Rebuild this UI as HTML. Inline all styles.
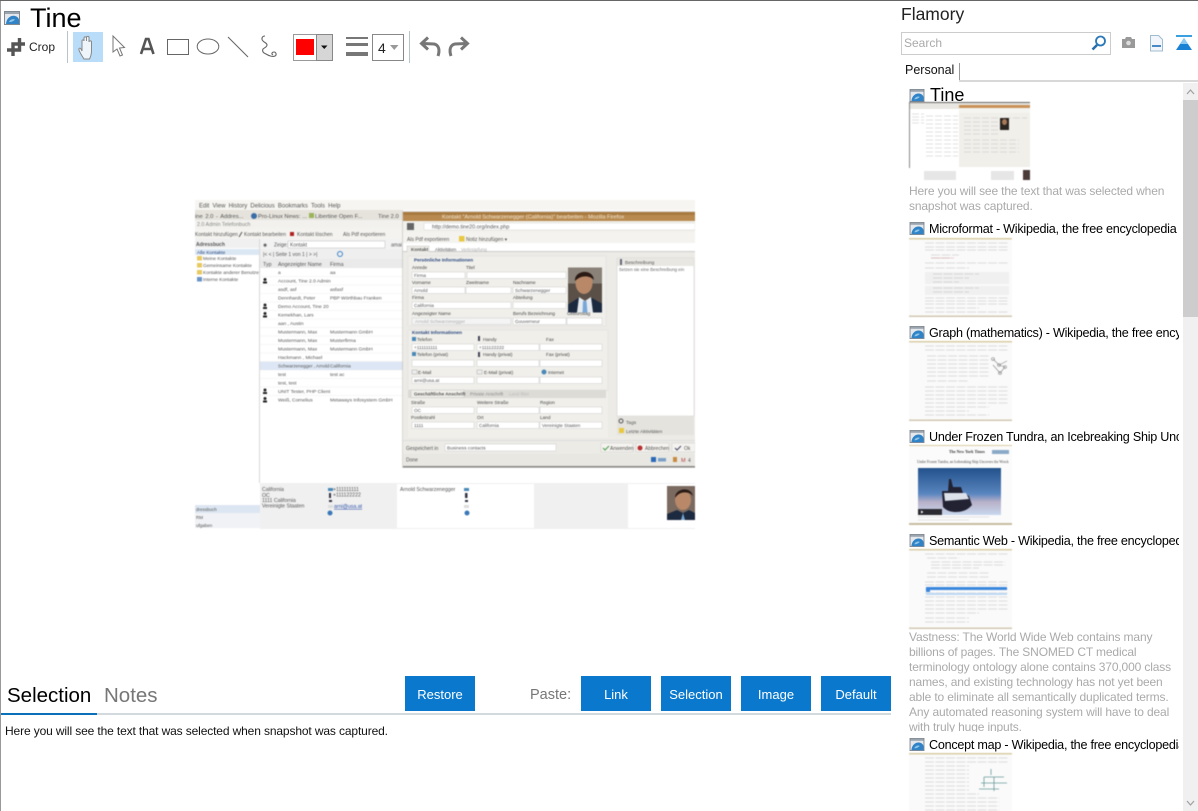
<!DOCTYPE html>
<html><head><meta charset="utf-8"><title>Flamory</title>
<style>
html,body{margin:0;padding:0;background:#fff}
#p{position:relative;width:1198px;height:811px;overflow:hidden;background:#fff;font-family:"Liberation Sans",sans-serif;color:#000}
#p>*{position:absolute}
.t{white-space:nowrap;line-height:1}
.b{background:#0a78cc;color:#fff;width:70px;height:35px;top:676px;text-align:center;font-size:13px;line-height:37px;font-weight:normal}
.it{left:929px;width:250px;overflow:hidden;font-size:12.6px;letter-spacing:-.25px;line-height:16px;white-space:nowrap}
.g{left:909px;width:270px;color:#aaa;font-size:12px;letter-spacing:-.14px;line-height:15px;white-space:nowrap}
svg{display:block;overflow:visible}
.th{filter:blur(.45px)}
</style></head><body><div id="p">
<svg width="0" height="0" style="left:0;top:0"><defs>
<symbol id="fav" viewBox="0 0 16 14"><rect x=".5" y=".5" width="15" height="13" fill="#e4e8ec" stroke="#808890"/><rect x="1" y="1" width="14" height="2" fill="#9aa4ae"/><path d="M2 13 C2.500 7 7 4 11 5 C13.500 5.600 15 7.500 15 9 L15 13Z" fill="#2f83c6"/><path d="M5 11 C6 8.500 9 7.500 11 8.500 C10 10 7 11.500 5 11Z" fill="#8cc4ea"/></symbol>
</defs></svg>

<div style="left:0;top:0;width:1198px;height:1px;background:#666"></div>
<div style="left:0;top:1px;width:1px;height:810px;background:#999"></div>

<svg width="16" height="14" style="left:4px;top:11px"><use href="#fav"/></svg>
<div class="t" style="left:30px;top:5px;font-size:27px">Tine</div>

<!-- toolbar -->
<svg width="480" height="40" style="left:0;top:28px" viewBox="0 28 480 40">
<path d="M19.500 38V50H7M13 56V44H25" stroke="#555" stroke-width="3.400" fill="none"/>
<rect x="67" y="31" width="1" height="32" fill="#b8c4cc"/>
<rect x="73" y="32" width="30" height="30" fill="#b9dcf8"/>
<path d="M84 59c-2-3-4-6-5-9-.5-2 1-2.500 2-1l1 2V41c0-1.500 2-1.500 2 0v-3c0-1.500 2.500-1.500 2.500 0v3-3.500c0-1.500 2.500-1.500 2.500 0V42c0-1.500 2.500-1.500 2.500 0v9c0 3-1 6-2 8h-6z" fill="#eef6fc" stroke="#888" stroke-width="1"/>
<path d="M113 36v16l4-3 3 7 2.500-1-3-7 5-.5z" fill="#fff" stroke="#777" stroke-width="1"/>
<path d="M141 54l5-15h2.500l5 15M143 49h8.500" stroke="#555" stroke-width="2.600" fill="none"/>
<rect x="167.500" y="39.500" width="21" height="15" fill="#fff" stroke="#666"/>
<ellipse cx="208" cy="46.500" rx="10.800" ry="7.500" fill="#fff" stroke="#666"/>
<path d="M228 37l20 20" stroke="#666" stroke-width="1.100"/>
<path d="M265 36c-3 0-4 3-2 5s4 2 4 4-3 3-4 4c-1 2 0 4 3 5 3 2 7 3 9 2s1-4-1-4-3 2-1 3" fill="none" stroke="#666" stroke-width="1.100"/>
<rect x="293.500" y="34.500" width="39" height="26" fill="#fff" stroke="#999"/>
<rect x="296" y="39" width="18" height="16" fill="#f00"/>
<rect x="316.500" y="34.500" width="16" height="26" fill="#d6d6d6" stroke="#888"/>
<path d="M321 45.500h6.500l-3.250 3.500z" fill="#111"/>
<rect x="346" y="37" width="22" height="2" fill="#777"/><rect x="346" y="43" width="22" height="3" fill="#777"/><rect x="346" y="52" width="22" height="4" fill="#777"/>
<rect x="372.500" y="34.500" width="31" height="26" fill="#fff" stroke="#888"/>
<path d="M390 45h8.500l-4.250 5z" fill="#999"/>
<rect x="409" y="31" width="1" height="32" fill="#b8c4cc"/>
<path d="M438 56c2-6 1-11-4-12l-11-.5M428 37.500l-6.500 6 6.500 6" fill="none" stroke="#777" stroke-width="3"/>
<path d="M451 56c-2-6-1-11 4-12l11-.5M461 37.500l6.500 6-6.500 6" fill="none" stroke="#777" stroke-width="3"/>
</svg>
<div class="t" style="left:29px;top:41px;font-size:12px;color:#222">Crop</div>
<div class="t" style="left:378px;top:41px;font-size:14px;color:#222">4</div>

<!-- main screenshot -->
<svg width="500" height="330" viewBox="195 200 500 330" style="left:195px;top:200px;overflow:hidden;filter:blur(.55px)" font-family="Liberation Sans" font-size="5.300" fill="#555">
<rect x="195" y="200" width="500" height="330" fill="#fff"/>
<rect x="195" y="200" width="500" height="10" fill="#f6f5f1"/>
<rect x="195" y="210" width="208" height="10" fill="#e6e3dc"/>
<rect x="195" y="220" width="208" height="8" fill="#f2f1ed"/>
<rect x="195" y="228" width="208" height="11" fill="#f4f3ef"/>
<text x="199" y="207.500" font-size="6" word-spacing="1.500">Edit View History Delicious Bookmarks Tools Help</text>
<text x="195" y="218" font-size="5.800" word-spacing="1">ine 2.0 - Addres...</text><text x="258" y="218" font-size="5.800">Pro-Linux News: ...</text><text x="315" y="218" font-size="5.800">Libertine Open F...</text><text x="378" y="218" font-size="5.800">Tine 2.0</text>
<circle cx="254" cy="216" r="3" fill="#3a6ea8"/><rect x="309" y="213" width="5" height="5" fill="#9ab45a"/>
<text x="197" y="226" fill="#888">2.0     Admin     Telefonbuch</text>
<text x="195" y="236" font-size="5">Kontakt hinzufügen</text><text x="244" y="236" font-size="5">Kontakt bearbeiten</text><text x="297" y="236" font-size="5">Kontakt löschen</text><text x="343" y="236" font-size="5">Als Pdf exportieren</text>
<path d="M239 237l3-5" stroke="#555"/><rect x="290" y="232" width="4" height="4" fill="#b02020"/>
<!-- sidebar -->
<rect x="195" y="239" width="65" height="9" fill="#f0f0f0"/>
<rect x="195" y="249" width="65" height="6" fill="#dce7f4"/>
<text x="196" y="246" font-weight="bold" font-size="5">Adressbuch</text>
<text x="197" y="254" font-size="4.800" fill="#24427a">Alle Kontakte</text>
<g fill="#e8c860"><rect x="197" y="256" width="5" height="4.500"/><rect x="197" y="263" width="5" height="4.500"/><rect x="197" y="270" width="5" height="4.500"/></g>
<rect x="197" y="277" width="5" height="4.500" fill="#6a94c8"/>
<g font-size="4.800"><text x="203" y="260">Meine Kontakte</text><text x="203" y="267">Gemeinsame Kontakte</text><text x="203" y="274">Kontakte anderer Benutzer</text><text x="203" y="281">Interne Kontakte</text></g>
<rect x="259" y="239" width="1" height="244" fill="#d8d8d8"/>
<!-- table -->
<rect x="260" y="239" width="143" height="10" fill="#f2f2f2"/>
<rect x="260" y="249" width="143" height="10" fill="#efefef"/>
<rect x="260" y="259" width="143" height="9" fill="#eaeaea"/>
<rect x="288" y="241" width="97" height="7" fill="#fff" stroke="#bbb" stroke-width=".5"/>
<text x="263" y="247" font-size="5">✱</text><text x="274" y="246.500" font-size="5">Zeige:</text><text x="290" y="246.500" font-size="5">Kontakt</text>
<text x="391" y="246.500" font-size="5">amai</text>
<text x="263" y="256" font-size="5">|&lt;  &lt;  | Seite 1  von 1 |  &gt;  &gt;|</text>
<circle cx="340" cy="254" r="2.500" fill="none" stroke="#3a84c8"/>
<text x="263" y="265.800">Typ</text><text x="278" y="265.800">Angezeigter Name</text><text x="330" y="265.800">Firma</text>
<rect x="260" y="361.500" width="143" height="8.500" fill="#dce6f4"/>
<g stroke="#eee" stroke-width=".5"><path d="M260 276.500H403M260 285H403M260 293.500H403M260 302H403M260 310.500H403M260 319H403M260 327.500H403M260 336H403M260 344.500H403M260 353H403M260 361.500H403M260 370H403M260 378.500H403M260 387H403M260 395.500H403"/></g>
<g font-size="4.900">
<text x="278" y="274">a</text><text x="330" y="274">aa</text>
<text x="278" y="282.500">Account, Tine 2.0 Admin</text>
<text x="278" y="291">asdf, asf</text><text x="330" y="291">asfasf</text>
<text x="278" y="299.500">Dennhardt, Peter</text><text x="330" y="299.500">PBP Wörthbau Franken</text>
<text x="278" y="308">Demo Account, Tine 20</text>
<text x="278" y="316.500">Kemekhan, Lars</text>
<text x="278" y="325">aan , Austin</text>
<text x="278" y="333.500">Mustermann, Max</text><text x="330" y="333.500">Mustermann GmbH</text>
<text x="278" y="342">Mustermann, Max</text><text x="330" y="342">Musterfirma</text>
<text x="278" y="350.500">Mustermann, Max</text><text x="330" y="350.500">Mustermann GmbH</text>
<text x="278" y="359">Hackmann , Michael</text>
<text x="278" y="367.500" font-size="4.600">Schwarzenegger , Arnold</text><text x="330" y="367.500">California</text>
<text x="278" y="376">test</text><text x="330" y="376">test ac</text>
<text x="278" y="384.500">test, test</text>
<text x="278" y="393">UNIT Tester, PHP Client</text>
<text x="278" y="401.500">Weiß, Cornelius</text><text x="330" y="401.500">Metaways Infosystem GmbH</text>
</g>
<g fill="#222"><circle cx="265" cy="279.500" r="1.500"/><rect x="263" y="281.500" width="4" height="2"/>
<circle cx="265" cy="305" r="1.500"/><rect x="263" y="307" width="4" height="2"/><circle cx="265" cy="313.500" r="1.500"/><rect x="263" y="315.500" width="4" height="2"/><circle cx="265" cy="390" r="1.500"/><rect x="263" y="392" width="4" height="2"/><circle cx="265" cy="398.500" r="1.500"/><rect x="263" y="400.500" width="4" height="2"/></g>
<!-- bottom preview -->
<rect x="195" y="505" width="65" height="23" fill="#f0f2f5"/>
<rect x="195" y="505" width="65" height="8" fill="#dce6f2"/>
<text x="196" y="511" font-size="4.500">dressbuch</text><text x="196" y="519" font-size="4.500">RM</text><text x="196" y="527" font-size="4.500">ufgaben</text>
<rect x="260" y="483" width="435" height="46" fill="#f0f0f0"/>
<rect x="397" y="484" width="137" height="44" fill="#fff"/><rect x="628" y="484" width="67" height="44" fill="#fff"/>
<g font-size="5.200"><text x="262" y="491">California</text><text x="262" y="497">OC</text><text x="262" y="502">1111 California</text><text x="262" y="507.500">Vereinigte Staaten</text>
<text x="333" y="491">+111111111</text><text x="333" y="496.500">+111122222</text><text x="334" y="508" fill="#2a4ea8" text-decoration="underline">arni@usa.at</text>
<text x="400" y="491">Arnold Schwarzenegger</text></g>
<g fill="#334"><rect x="328" y="488" width="5" height="3" fill="#4a88b8"/><rect x="329" y="493" width="2" height="5"/><rect x="329" y="500" width="3" height="2"/><rect x="328" y="505" width="5" height="3" fill="#ddd"/><circle cx="330" cy="513" r="2.500" fill="#3a78b8"/>
<rect x="464" y="488" width="5" height="3" fill="#4a88b8"/><rect x="465" y="493" width="2.500" height="5"/><rect x="465" y="500" width="3" height="2"/><rect x="464" y="505" width="5" height="3" fill="#ddd"/><circle cx="467" cy="513" r="2.500" fill="#3a78b8"/></g>
<rect x="667" y="486" width="28" height="34" fill="#7a6a60"/><ellipse cx="683" cy="500" rx="8" ry="10" fill="#b88868"/><path d="M675 498c0-10 16-12 18-2l-2-2c-6-3-12-2-16 4z" fill="#2a1a14"/><path d="M667 520v-6l10-4 6 3 6-3 6 3v7z" fill="#1c2a40"/><path d="M681 520l2-7 2 7z" fill="#7aa6d0"/>
<!-- dialog -->
<rect x="402" y="211" width="293" height="257" fill="#b8b4ac" opacity=".5"/>
<rect x="403" y="212" width="292" height="254" fill="#ecebe6"/>
<rect x="403" y="212" width="292" height="9" fill="#b88a50"/>
<rect x="403" y="212" width="292" height="3" fill="#a87a40"/>
<text x="442" y="218.500" font-size="5.600" fill="#f0e4d0">Kontakt "Arnold Schwarzenegger (California)" bearbeiten - Mozilla Firefox</text>
<rect x="403" y="221" width="292" height="11" fill="#f2f1ec"/>
<rect x="424" y="223" width="271" height="7" fill="#fff" stroke="#ccc" stroke-width=".4"/>
<rect x="407" y="223" width="7" height="7" fill="#666"/>
<text x="432" y="228.500" font-size="5.400">http://demo.tine20.org/index.php</text>
<rect x="403" y="232" width="292" height="11" fill="#f4f3ef"/>
<text x="407" y="241" font-size="5">Als Pdf exportieren</text><rect x="459" y="236" width="5.500" height="5.500" fill="#e8c840"/><text x="466" y="241" font-size="5">Notiz hinzufügen  ▾</text>
<rect x="403" y="243" width="292" height="9" fill="#fff"/>
<rect x="403" y="251" width="292" height="1" fill="#ccc"/>
<rect x="407" y="246" width="22" height="7" fill="#ecebe6" stroke="#bbb" stroke-width=".4"/><text x="411" y="251" font-size="4.600" font-weight="bold">Kontakt</text>
<text x="435" y="251" font-size="4.600">Aktivitäten</text><text x="461" y="251" font-size="4.600" fill="#aaa">Verknüpfung</text>
<rect x="403" y="252" width="292" height="214" fill="#ecebe6"/>
<rect x="408" y="256" width="198" height="70" fill="#f0efea" stroke="#ddd" stroke-width=".5"/>
<rect x="408" y="330" width="200" height="60" fill="#f0efea" stroke="#ddd" stroke-width=".5"/>
<rect x="408" y="392" width="200" height="46" fill="#f0efea"/>
<g font-size="4.700" fill="#444">
<text x="414" y="261.500" fill="#24427a" font-weight="bold">Persönliche Informationen</text>
<text x="412" y="269">Anrede</text><text x="466" y="269">Titel</text>
<text x="412" y="284">Vorname</text><text x="466" y="284">Zweitname</text><text x="513" y="284">Nachname</text>
<text x="412" y="299">Firma</text><text x="513" y="299">Abteilung</text>
<text x="412" y="315">Angezeigter Name</text><text x="513" y="315">Berufs Bezeichnung</text><text x="567" y="315">Geburtstag</text>
<text x="412" y="334" fill="#24427a" font-weight="bold">Kontakt Informationen</text>
<text x="417" y="341">Telefon</text><text x="483" y="341">Handy</text><text x="546" y="341">Fax</text>
<text x="417" y="356">Telefon (privat)</text><text x="483" y="356">Handy (privat)</text><text x="546" y="356">Fax (privat)</text>
<text x="418" y="374">E-Mail</text><text x="484" y="374">E-Mail (privat)</text><text x="548" y="374">Internet</text>
<text x="411" y="404">Straße</text><text x="477" y="404">Weitere Straße</text><text x="540" y="404">Region</text>
<text x="411" y="419">Postleitzahl</text><text x="477" y="419">Ort</text><text x="540" y="419">Land</text>
</g>
<g fill="#fff" stroke="#ccc" stroke-width=".5">
<rect x="412" y="272" width="53" height="6.500"/><rect x="467" y="272" width="99" height="6.500"/>
<rect x="412" y="287" width="53" height="6.500"/><rect x="466" y="287" width="45" height="6.500"/><rect x="513" y="287" width="53" height="6.500"/>
<rect x="412" y="302" width="99" height="6.500"/><rect x="513" y="302" width="53" height="6.500"/>
<rect x="412" y="318" width="99" height="6.500" fill="#f4f4f4"/><rect x="513" y="318" width="53" height="6.500"/><rect x="567" y="318" width="35" height="6.500"/>
<rect x="412" y="344" width="62" height="6.500"/><rect x="477" y="344" width="62" height="6.500"/><rect x="540" y="344" width="62" height="6.500"/>
<rect x="412" y="360" width="62" height="6.500"/><rect x="477" y="360" width="62" height="6.500"/><rect x="540" y="360" width="62" height="6.500"/>
<rect x="412" y="377" width="62" height="6.500"/><rect x="477" y="377" width="62" height="6.500"/><rect x="540" y="377" width="62" height="6.500"/>
<rect x="412" y="407" width="62" height="6.500"/><rect x="477" y="407" width="62" height="6.500"/><rect x="540" y="407" width="62" height="6.500"/>
<rect x="412" y="422" width="62" height="6.500"/><rect x="477" y="422" width="62" height="6.500"/><rect x="540" y="422" width="62" height="6.500"/>
</g>
<g font-size="4.700">
<text x="414" y="277">Firma</text><text x="414" y="292">Arnold</text><text x="515" y="292">Schwarzenegger</text>
<text x="414" y="307">California</text><text x="415" y="323" fill="#aaa">Arnold Schwarzenegger</text><text x="515" y="323">Gouverneur</text>
<text x="414" y="349">+111111111</text><text x="479" y="349">+111122222</text><text x="414" y="382">arni@usa.at</text>
<text x="414" y="412">OC</text><text x="414" y="427">1111</text><text x="479" y="427">California</text><text x="542" y="427">Vereinigte Staaten</text>
</g>
<g fill="#4a88b8"><rect x="412" y="337" width="4" height="4"/><rect x="412" y="352" width="4" height="4"/><circle cx="544" cy="372" r="2.500"/></g>
<rect x="478" y="336" width="2" height="5" fill="#445"/><rect x="478" y="352" width="2" height="5" fill="#445"/>
<rect x="412" y="370" width="5" height="4" fill="#eee" stroke="#999" stroke-width=".4"/><rect x="477" y="370" width="5" height="4" fill="#eee" stroke="#999" stroke-width=".4"/>
<rect x="408" y="390" width="198" height="8" fill="#dcdbd6"/>
<rect x="411" y="390" width="53" height="7.500" fill="#f0efea" stroke="#bbb" stroke-width=".4"/><text x="414" y="395.500" font-size="4.600" font-weight="bold">Geschäftliche Anschrift</text>
<text x="470" y="395.500" font-size="4.600" fill="#888">Private Anschrift</text><text x="509" y="395.500" font-size="4.600" fill="#bbb">Land filter</text>
<!-- photo -->
<rect x="568" y="267.500" width="34" height="45" fill="#5a5048"/>
<rect x="568" y="267.500" width="34" height="16" fill="#8a8278"/>
<ellipse cx="584" cy="283" rx="8.500" ry="11" fill="#b88868"/>
<path d="M575 281c-1-11 18-13 19-1-5-5-13-5-19 1z" fill="#2a1a14"/>
<path d="M568 312.500v-8l11-7 6 4 6-4 11 6v9z" fill="#1c2a40"/>
<path d="M579 297l6 4 6-4 2 15.500H577z" fill="#e8ecf0"/>
<path d="M583 301h3.500l1 11.500h-5z" fill="#78a8d8"/>
<!-- right panel -->
<rect x="617" y="258" width="77" height="158" fill="#fff" stroke="#ccc" stroke-width=".5"/>
<rect x="617" y="258" width="77" height="8" fill="#e8e7e2"/>
<rect x="620" y="259" width="2" height="6" fill="#667"/>
<text x="625" y="264" font-size="4.800">Beschreibung</text>
<text x="619" y="271" font-size="4.400" fill="#666">Setzen sie eine Beschreibung ein</text>
<rect x="617" y="416" width="77" height="9" fill="#e4e3de"/><rect x="617" y="425" width="77" height="10" fill="#e4e3de"/>
<text x="626" y="424" font-size="4.800">Tags</text><text x="626" y="433" font-size="4.800">Letzte Aktivitäten</text>
<rect x="619" y="428" width="5" height="5" fill="#e8c840"/><circle cx="621" cy="421" r="2" fill="none" stroke="#555"/>
<!-- dialog bottom -->
<rect x="403" y="440" width="292" height="1" fill="#ddd"/>
<text x="406" y="450" font-size="5">Gespeichert in</text>
<rect x="445" y="444" width="111" height="7" fill="#fff" stroke="#ccc" stroke-width=".5"/>
<text x="447" y="449.500" font-size="4.800">Business contacts</text>
<rect x="601" y="443" width="32" height="9" fill="#f4f3ef" stroke="#ccc" stroke-width=".5"/>
<rect x="636" y="443" width="33" height="9" fill="#f4f3ef" stroke="#ccc" stroke-width=".5"/>
<rect x="672" y="443" width="23" height="9" fill="#f4f3ef" stroke="#ccc" stroke-width=".5"/>
<path d="M603 448l2 2 4-4" stroke="#4a9a4a" fill="none"/><circle cx="640" cy="448" r="2.500" fill="#b83030"/><path d="M675 448l2 2 4-4" stroke="#446" fill="none"/>
<text x="610" y="450" font-size="5">Anwenden</text><text x="645" y="450" font-size="5">Abbrechen</text><text x="684" y="450" font-size="5">Ok</text>
<rect x="403" y="454" width="292" height="12" fill="#e8e7e2"/>
<text x="406" y="461.500" font-size="5">Done</text>
<rect x="651" y="457" width="5" height="5" fill="#2a68b8"/><rect x="658" y="458" width="8" height="3.500" fill="#7aa0c8"/><rect x="673" y="457" width="4" height="5" fill="#c88a40"/><text x="681" y="462" font-size="5.500" fill="#b84040">M</text><text x="688" y="462" font-size="5">4</text>
<rect x="403" y="466" width="292" height="1.500" fill="#888"/>
</svg>

<!-- bottom tabs -->
<div class="t" style="left:7px;top:686px;font-size:20.500px">Selection</div>
<div class="t" style="left:104px;top:686px;font-size:20.500px;color:#777">Notes</div>
<div style="left:1px;top:713px;width:890px;height:2px;background:#d3dadd"></div>
<div style="left:1px;top:713px;width:96px;height:2px;background:#0a70b8"></div>
<div class="t" style="left:5px;top:725px;font-size:12px;letter-spacing:-.13px;color:#111">Here you will see the text that was selected when snapshot was captured.</div>
<div class="t" style="left:530px;top:688px;font-size:14.500px;color:#777">Paste:</div>
<div class="b" style="left:405px">Restore</div>
<div class="b" style="left:581px">Link</div>
<div class="b" style="left:661px">Selection</div>
<div class="b" style="left:741px">Image</div>
<div class="b" style="left:821px">Default</div>

<!-- right panel -->
<div class="t" style="left:901px;top:6px;font-size:17.500px;color:#222">Flamory</div>
<div style="left:901px;top:32px;width:208px;height:21px;border:1px solid #ccc"></div>
<div class="t" style="left:904px;top:37px;font-size:12px;color:#aaa">Search</div>
<svg width="110" height="30" viewBox="1090 28 110 30" style="left:1090px;top:28px">
<circle cx="1100.500" cy="41" r="4.500" fill="#fff" stroke="#2a78b8" stroke-width="1.800"/><path d="M1097 45l-4.500 4.500" stroke="#2a6ea8" stroke-width="2.600"/>
<path d="M1122 39h3l1-2h5l1 2h3v9h-13z" fill="#999"/><circle cx="1128.500" cy="43" r="2.300" fill="#ddd"/>
<path d="M1150.500 35.500h8l4 4v11.500h-12z" fill="#f2f6fa" stroke="#a0bcd0"/><rect x="1152" y="45" width="9" height="2" fill="#4a88c8"/>
<rect x="1176" y="35" width="16" height="2" fill="#3aa0e0"/><path d="M1184 38l-8 12h16z" fill="#1a82d4"/><path d="M1184 38l-4 6h8z" fill="#8ccaf2"/>
</svg>
<div class="t" style="left:905px;top:64px;font-size:12.500px;color:#111">Personal</div>
<div style="left:959px;top:63px;width:1px;height:18px;background:#999"></div>
<div style="left:959px;top:80px;width:239px;height:2px;background:#d8d8d8"></div>

<!-- scrollbar -->
<div style="left:1183px;top:83px;width:15px;height:728px;background:#f0f0f0"></div>
<div style="left:1183px;top:100px;width:15px;height:217px;background:#cdcdcd"></div>
<svg width="15" height="728" viewBox="1183 83 15 728" style="left:1183px;top:83px"><path d="M1187 94l3.500-4 3.500 4M1187 801l3.500 4 3.500-4" fill="none" stroke="#a0a0a0" stroke-width="1.200"/></svg>

<!-- items -->
<svg width="16" height="13" style="left:909px;top:89px"><use href="#fav"/></svg>
<div class="t" style="left:930px;top:86px;font-size:18px">Tine</div>
<svg class="th" width="121" height="79" viewBox="0 0 121 79" style="left:909px;top:102px">
<rect width="121" height="79" fill="#fff"/><rect width="121" height="1" fill="#666"/><rect x="0" y="1" width="1" height="78" fill="#888"/>
<rect x="1" y="1" width="120" height="6" fill="#e8e6e0"/>
<rect x="50" y="3" width="71" height="62" fill="#f0efea"/><rect x="50" y="3" width="71" height="3" fill="#c8925a"/>
<rect x="50" y="6" width="71" height="5" fill="#f4f4f0"/>
<g stroke="#c4c4c4" stroke-width=".6" stroke-dasharray="7 2"><path d="M3 12H15M3 15H15M3 18H15M3 21H15"/><path d="M17 14H49M17 18H49M17 22H49M17 26H49M17 30H49M17 34H49M17 38H49M17 42H49M17 46H49M17 50H49M17 54H49"/><path d="M55 16H90M55 20H90M55 24H90M55 28H90M55 32H90M55 38H110M55 42H110M55 46H110M55 50H110"/><path d="M95 16H118"/></g>
<rect x="91" y="16" width="9" height="12" fill="#2a2420"/><ellipse cx="95.500" cy="20" rx="2.500" ry="3" fill="#a87858"/>
<rect x="0" y="66" width="121" height="13" fill="#fff"/><rect x="15" y="69" width="32" height="9" fill="#e6e6e6"/><rect x="82" y="69" width="23" height="9" fill="#e6e6e6"/><rect x="114" y="68" width="7" height="10" fill="#4a3a38"/>
</svg>
<div class="g" style="top:184px">Here you will see the text that was selected when<br>snapshot was captured.</div>

<svg width="16" height="13" style="left:909px;top:222px"><use href="#fav"/></svg>
<div class="it" style="top:221px">Microformat - Wikipedia, the free encyclopedia</div>
<svg class="th" width="103" height="79" viewBox="0 0 103 79" style="left:909px;top:238px">
<rect width="103" height="79" fill="#fafafa"/><rect width="103" height="1.500" fill="#d8cca4"/><rect y="77.500" width="103" height="1.500" fill="#d0c8b0"/>
<rect x="16" y="34" width="84" height="12" fill="#f0f0f0"/><rect x="16" y="48" width="84" height="9" fill="#f0f0f0"/>
<g stroke="#bbb" stroke-width=".6" stroke-dasharray="9 1.500"><path d="M16 5H100M16 9H100M16 12H100M16 25H100M16 30H60"/><path d="M22 17H50M22 20H40M24 36H70M24 40H60M24 44H50M24 50H70M24 54H60M16 60H100M16 63H100M16 66H100M16 70H70M16 74H100"/></g>
<path d="M22 20H45" stroke="#d8a0a0" stroke-width=".6"/>
</svg>

<svg width="16" height="13" style="left:909px;top:326px"><use href="#fav"/></svg>
<div class="it" style="top:325px">Graph (mathematics) - Wikipedia, the free encyclopedia</div>
<svg class="th" width="103" height="80" viewBox="0 0 103 80" style="left:909px;top:341px">
<rect width="103" height="80" fill="#fafafa"/><rect width="103" height="1.500" fill="#d8cca4"/><rect y="78.500" width="103" height="1.500" fill="#d0c8b0"/>
<g stroke="#bbb" stroke-width=".6" stroke-dasharray="9 1.500"><path d="M16 5H100M16 9H100M18 15H80M18 19H80M18 23H80M18 27H80M18 31H80M18 35H80M18 40H60M16 46H100M16 50H100M16 54H100M16 58H100M16 62H100M16 66H80M16 70H60M16 74H80"/></g>
<g fill="none" stroke="#888" stroke-width=".6"><path d="M84 18l6 6 6 2-5 6-7-8M90 24l8-4"/><circle cx="84" cy="18" r="1.500"/><circle cx="96" cy="26" r="1.500"/><circle cx="91" cy="32" r="1.500"/><circle cx="90" cy="24" r="1.500"/></g>
</svg>

<svg width="16" height="13" style="left:909px;top:430px"><use href="#fav"/></svg>
<div class="it" style="top:429px">Under Frozen Tundra, an Icebreaking Ship Uncovers the Wreck</div>
<svg class="th" width="103" height="80" viewBox="0 0 103 80" style="left:909px;top:445px">
<defs><linearGradient id="sky" x1="0" y1="0" x2="0" y2="1"><stop offset="0" stop-color="#22528c"/><stop offset=".55" stop-color="#5a86c0"/><stop offset=".72" stop-color="#b8b0c8"/><stop offset="1" stop-color="#c8d8ee"/></linearGradient></defs>
<rect width="103" height="80" fill="#fbfbfb"/><rect width="103" height="1" fill="#d8cca4"/><rect y="78" width="103" height="2" fill="#c8bca0"/>
<text x="40" y="8" font-family="Liberation Serif" font-size="4" fill="#333" font-weight="bold">The New York Times</text>
<rect x="83" y="5" width="17" height="4" fill="#8aa8c8"/>
<text x="8" y="18" font-family="Liberation Serif" font-size="3.600" fill="#444">Under Frozen Tundra, an Icebreaking Ship Uncovers the Wreck</text>
<rect x="9" y="23" width="83" height="47" fill="url(#sky)"/>
<path d="M33 46h6l1-12 2 0 2 8h8l2 6 6 3 3 9c-4 5-10 7-16 7-5 0-9-1-13-5z" fill="#223"/>
<path d="M35 48h22l3 6-24 2z" fill="#dde2ea"/>
<rect x="9" y="64" width="24" height="6" fill="#2a2a30"/><path d="M12 65.500v3l2.500-1.500z" fill="#fff"/>
<path d="M9 72H80M9 75H60" stroke="#ccc" stroke-width=".6"/>
</svg>

<svg width="16" height="13" style="left:909px;top:534px"><use href="#fav"/></svg>
<div class="it" style="top:533px">Semantic Web - Wikipedia, the free encyclopedia</div>
<svg class="th" width="103" height="80" viewBox="0 0 103 80" style="left:909px;top:549px">
<rect width="103" height="80" fill="#fafafa"/><rect width="103" height="1.500" fill="#d8cca4"/><rect y="78.500" width="103" height="1.500" fill="#d0c8b0"/>
<g stroke="#bbb" stroke-width=".6" stroke-dasharray="9 1.500"><path d="M16 5H100M18 9H50M22 13H96M22 16H96M22 19H70M18 24H80M18 28H80M16 33H100M16 36H100M16 40H100M16 44H100M16 48H100M16 52H100M16 56H100M16 60H100M16 64H70M16 69H60M16 73H60"/></g>
<rect x="17" y="38" width="81" height="3" fill="#3a86dc"/><rect x="17" y="41" width="4" height="2" fill="#3a86dc"/><rect x="17" y="44" width="81" height="2" fill="#bcd8f4"/>
</svg>
<div class="g" style="top:630px;height:102px;overflow:hidden">Vastness: The World Wide Web contains many<br>billions of pages. The SNOMED CT medical<br>terminology ontology alone contains 370,000 class<br>names, and existing technology has not yet been<br>able to eliminate all semantically duplicated terms.<br>Any automated reasoning system will have to deal<br>with truly huge inputs.</div>

<svg width="16" height="13" style="left:909px;top:738px"><use href="#fav"/></svg>
<div class="it" style="top:737px">Concept map - Wikipedia, the free encyclopedia</div>
<svg class="th" width="103" height="58" viewBox="0 0 103 58" style="left:909px;top:753px">
<rect width="103" height="58" fill="#fafafa"/><rect width="103" height="1.500" fill="#d8cca4"/>
<g stroke="#bbb" stroke-width=".6" stroke-dasharray="9 1.500"><path d="M16 5H100M16 9H100M16 13H60M16 17H60M16 21H60M16 25H60M16 29H60M16 33H60M16 37H60M16 41H70M16 45H90M16 49H90M16 53H90M16 57H90"/></g>
<g stroke="#6a9a9a" stroke-width=".8" fill="none"><path d="M82 16v6M75 24H95M72 30H98M70 36H90M85 24v14M75 24v10"/></g>
</svg>
</div></body></html>
